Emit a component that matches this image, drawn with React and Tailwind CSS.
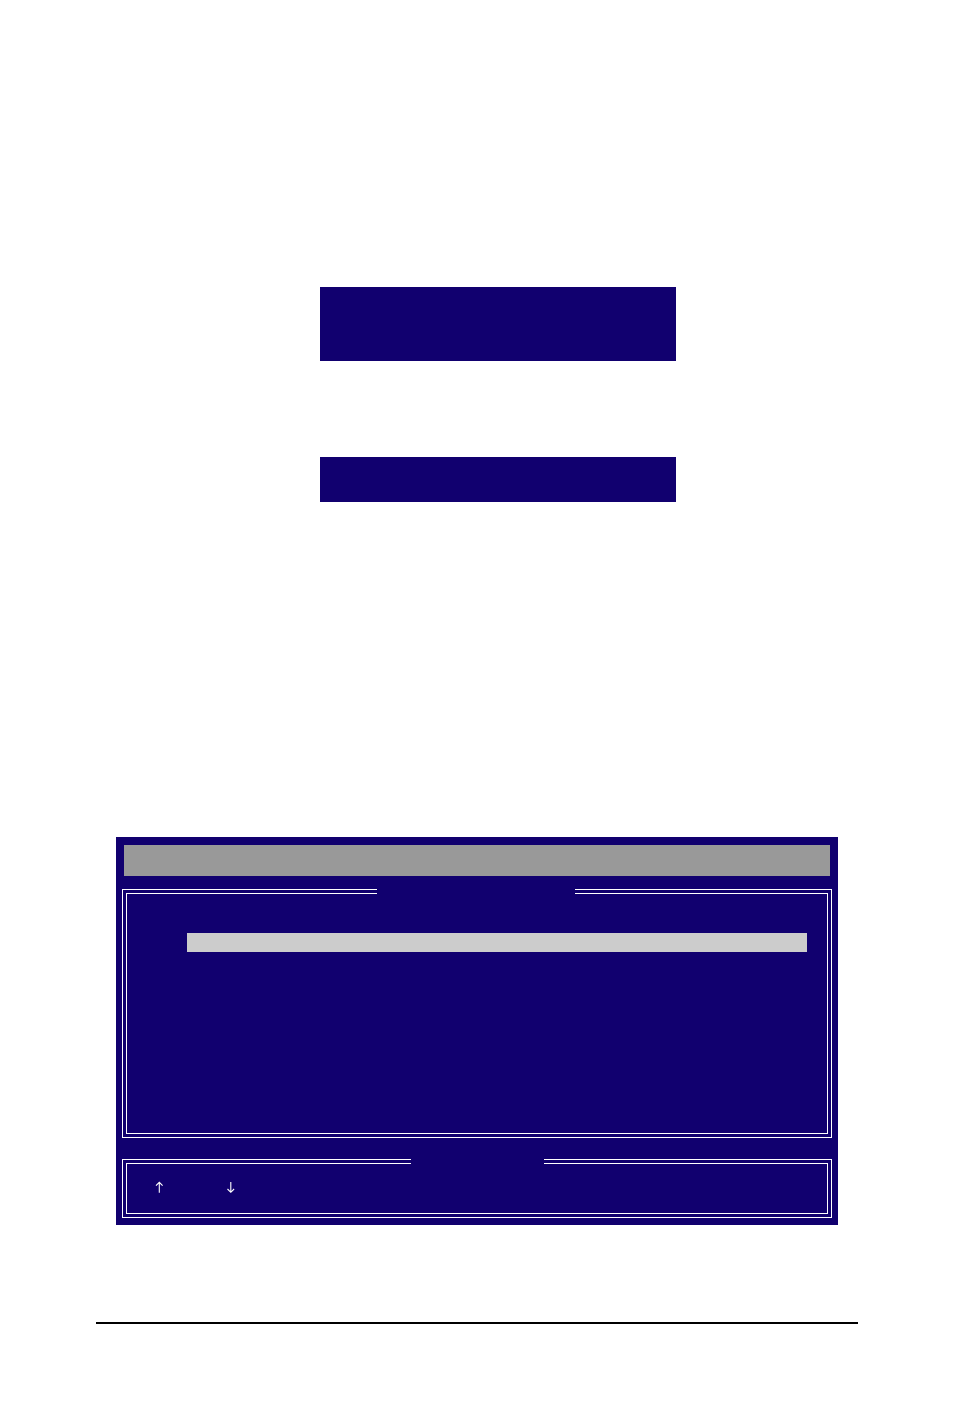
import React from 'react'

function Notice({ className }) {
  return <div className={`ml-56 w-[356px] bg-[#11006f] ${className}`} />
}

function DoubleFrame({ gap, className, children }) {
  return (
    <section className={`relative border border-white p-[3px] ${className}`}>
      <div className="h-full border border-white">{children}</div>
      {/* opening in the top border */}
      <div className={`absolute -top-px h-[5px] bg-[#11006f] ${gap}`} />
    </section>
  )
}

function SetupScreen() {
  return (
    <div className="mx-5 mt-[335px] bg-[#11006f] px-1.5 pt-2 pb-[7px]">
      <header className="mx-0.5 h-[31px] bg-[#999999]" />
      <DoubleFrame gap="left-[254px] right-[256px]" className="mt-[13px] h-[249px]">
        <div className="mt-[39px] mr-5 ml-[60px] h-[19px] bg-[#cccccc]" />
      </DoubleFrame>
      <DoubleFrame gap="left-[288px] right-[287px]" className="mt-[21px] h-[59px]">
        <div className="flex gap-[60px] pt-4 pl-[26px] text-white">
          <svg role="img" aria-label="Up" className="h-4 w-3" viewBox="0 0 12 16" fill="none" stroke="currentColor" strokeWidth="1.1">
            <path d="M6.3 12.8V2.2M3 5.6L6.3 2.3L9.6 5.6" />
          </svg>
          <svg role="img" aria-label="Down" className="h-4 w-3" viewBox="0 0 12 16" fill="none" stroke="currentColor" strokeWidth="1.1">
            <path d="M5.8 2V12.4M2.5 9L5.8 12.3L9.1 9" />
          </svg>
        </div>
      </DoubleFrame>
    </div>
  )
}

export default function App() {
  return (
    <div className="min-h-screen bg-white px-24 pt-[287px]">
      <main>
        <Notice className="h-[74px]" />
        <Notice className="mt-24 h-[45px]" />
        <SetupScreen />
      </main>
      <hr className="mt-[97px] border-t-2 border-black" />
    </div>
  )
}
